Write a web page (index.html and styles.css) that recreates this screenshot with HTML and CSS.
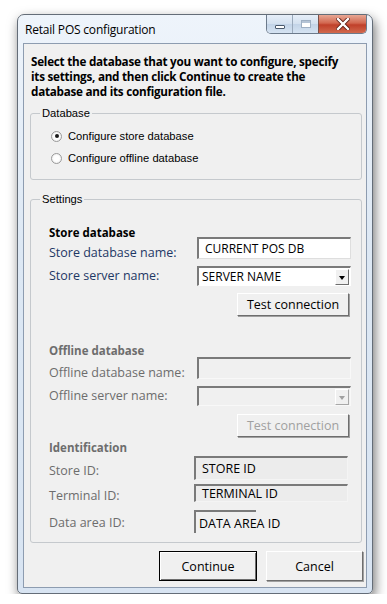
FILE: index.html
```html
<!DOCTYPE html>
<html lang="en">
<head>
    <meta charset="UTF-8">
    <title>Retail POS configuration</title>
    <link rel="stylesheet" href="styles.css">
</head>
<body>
    <div class="window">
        <!-- Title bar -->
        <div class="titlebar">
            <span class="title">Retail POS configuration</span>
            <div class="caption-buttons">
                <div class="cap-btn cap-min"><span class="min-glyph"></span></div>
                <div class="cap-btn cap-max"><span class="max-glyph"></span></div>
                <div class="cap-btn cap-close">
                    <svg width="14" height="12" viewBox="0 0 14 12">
                        <path d="M2 1 L12 11 M12 1 L2 11" stroke="#5a1a12" stroke-width="4" stroke-linecap="square"/>
                        <path d="M2 1 L12 11 M12 1 L2 11" stroke="#fff" stroke-width="2.4" stroke-linecap="square"/>
                    </svg>
                </div>
            </div>
        </div>

        <!-- Client area -->
        <div class="client">
            <p class="intro">Select the database that you want to configure, specify its settings, and then click Continue to create the database and its configuration file.</p>

            <fieldset class="group group-db">
                <legend>Database</legend>
                <label class="radio-row"><span class="radio checked"></span>Configure store database</label>
                <label class="radio-row"><span class="radio"></span>Configure offline database</label>
            </fieldset>

            <fieldset class="group group-settings">
                <legend>Settings</legend>

                <!-- Store database -->
                <div class="section-title title-store">Store database</div>
                <div class="field-row row-first">
                    <span class="label">Store database name:</span>
                    <div class="textbox">CURRENT POS DB</div>
                </div>
                <div class="field-row row-second">
                    <span class="label">Store server name:</span>
                    <div class="combo">
                        <span>SERVER NAME</span>
                        <span class="combo-arrow"></span>
                    </div>
                </div>
                <div class="btn-row">
                    <div class="btn btn-test">Test connection</div>
                </div>

                <!-- Offline database -->
                <div class="disabled">
                    <div class="section-title title-offline">Offline database</div>
                    <div class="field-row row-first">
                        <span class="label">Offline database name:</span>
                        <div class="textbox"></div>
                    </div>
                    <div class="field-row row-second">
                        <span class="label">Offline server name:</span>
                        <div class="combo">
                            <span></span>
                            <span class="combo-arrow"></span>
                        </div>
                    </div>
                    <div class="btn-row btn-row-offline">
                        <div class="btn btn-test">Test connection</div>
                    </div>
                </div>

                <!-- Identification -->
                <div class="disabled">
                    <div class="section-title title-ident">Identification</div>
                    <div class="id-row id-row-store">
                        <span class="label">Store ID:</span>
                        <div class="idbox idbox-wide">STORE ID</div>
                    </div>
                    <div class="id-row id-row-terminal">
                        <span class="label">Terminal ID:</span>
                        <div class="idbox idbox-wide">TERMINAL ID</div>
                    </div>
                    <div class="id-row id-row-area">
                        <span class="label">Data area ID:</span>
                        <div class="idbox idbox-short">DATA AREA ID</div>
                    </div>
                </div>
            </fieldset>

            <div class="dialog-buttons">
                <div class="btn btn-dialog btn-default">Continue</div>
                <div class="btn btn-dialog">Cancel</div>
            </div>
        </div>
    </div>
</body>
</html>
```

FILE: styles.css
```css
* {
    margin: 0;
    padding: 0;
    box-sizing: border-box;
}

body {
    background: #ffffff;
    font-family: 'Open Sans', 'Noto Sans', sans-serif;
    font-size: 12px;
    color: #000;
    padding: 14px 0 0 17px;
}

/* Window frame */
.window {
    width: 356px;
    height: 580px;
    border: 1px solid #646d78;
    border-radius: 7px 7px 5px 5px;
    background: linear-gradient(180deg, #eef4fb 0%, #dde8f4 40%, #d8e4f2 100%);
    box-shadow: 2px 5px 12px rgba(0, 0, 0, 0.55);
    padding: 0 5px 5px;
    display: flex;
    flex-direction: column;
}

.titlebar {
    height: 28px;
    display: flex;
    justify-content: space-between;
    align-items: flex-start;
}

.title {
    font-size: 12px;
    padding: 6px 0 0 2px;
    color: #000;
    letter-spacing: -0.2px;
}

.caption-buttons {
    display: flex;
    height: 19px;
    border: 1px solid #6c7a8b;
    border-top: none;
    border-radius: 0 0 5px 5px;
    overflow: hidden;
}

.cap-btn {
    height: 18px;
    display: flex;
    align-items: center;
    justify-content: center;
    background: linear-gradient(180deg, #e6eef8 0%, #d3e0ef 50%, #c2d3e7 51%, #d5e3f2 100%);
}

.cap-min {
    width: 26px;
    border-right: 1px solid #9aa9bb;
}

.cap-max {
    width: 26px;
    border-right: 1px solid #7a5048;
}

.cap-close {
    width: 47px;
    background: linear-gradient(180deg, #e7a794 0%, #d2674f 45%, #c0402a 55%, #d1694e 100%);
}

.min-glyph {
    width: 10px;
    height: 4px;
    margin-top: 5px;
    background: #fff;
    border: 1px solid #4b5a6d;
    border-radius: 1px;
}

.max-glyph {
    width: 10px;
    height: 8px;
    border: 1px solid #9fb0c4;
    background: #fff;
    box-shadow: inset 0 2px 0 #b5c4d6;
}

.client {
    flex: 1;
    background: #f0f0f0;
    border: 1px solid #8d9cb0;
    padding: 10px 4px 0 6px;
    display: flex;
    flex-direction: column;
}

.intro {
    max-width: 316px;
    font-weight: bold;
    font-size: 11.7px;
    line-height: 15px;
    letter-spacing: -0.25px;
    padding: 0 0 0 1px;
    margin-bottom: 8px;
}

/* Group boxes */
.group {
    border: 1px solid #c5c9cd;
    border-radius: 3px;
    padding: 0 0 0 18px;
    font-family: 'Liberation Sans', Arial, sans-serif;
    font-size: 11.2px;
}

.group legend {
    padding: 0 2px;
    margin-left: -9px;
    color: #000;
}

.group-db {
    height: 73px;
    padding-top: 6px;
    margin-bottom: 13px;
}

.radio-row {
    display: flex;
    align-items: center;
    height: 22px;
    color: #000;
}

.radio {
    width: 11px;
    height: 11px;
    border-radius: 50%;
    border: 1px solid #9a9a9a;
    background: radial-gradient(circle, #ffffff 40%, #e4e4e4 100%);
    margin-right: 6px;
    margin-left: 2px;
    position: relative;
}

.radio.checked::after {
    content: '';
    position: absolute;
    left: 2.5px;
    top: 2.5px;
    width: 4px;
    height: 4px;
    border-radius: 50%;
    background: #1a1a1a;
}

.group-settings {
    height: 350px;
    padding: 22px 10px 0 18px;
    font-family: 'Open Sans', 'Noto Sans', sans-serif;
    font-size: 12px;
}

.group-settings legend {
    font-family: 'Liberation Sans', Arial, sans-serif;
    font-size: 11.2px;
}

/* Section titles */
.section-title {
    font-weight: bold;
    font-size: 11.5px;
    line-height: 12px;
    height: 12px;
}

.title-store {
    height: 10px;
}

.title-offline {
    margin-top: 29px;
}

.title-ident {
    margin-top: 5px;
}

/* Field rows */
.field-row {
    display: flex;
    align-items: flex-start;
    justify-content: space-between;
}

.row-first {
    height: 22px;
}

.row-first .label {
    padding-top: 8px;
}

.row-second {
    height: 20px;
    margin-top: 7px;
    align-items: center;
}

.label {
    color: #1e3865;
    font-size: 12.5px;
    line-height: 16px;
}

.disabled .label,
.disabled .section-title {
    color: #6d6d6d;
}

.textbox,
.combo {
    width: 154px;
    height: 22px;
    background: #fff;
    border: 1px solid #dedede;
    border-top: 2px solid #7a7a7a;
    border-left: 2px solid #7a7a7a;
    padding: 1px 6px;
    font-size: 12px;
    line-height: 17px;
    color: #000;
}

.combo {
    height: 20px;
    display: flex;
    justify-content: space-between;
    align-items: center;
    padding: 0 1px 0 3px;
    border-right-color: #fff;
    border-bottom-color: #fff;
}

.combo-arrow {
    width: 14px;
    height: 16px;
    background: #f0f0f0;
    border: 1px solid;
    border-color: #fff #6d6d6d #6d6d6d #fff;
    position: relative;
}

.combo-arrow::after {
    content: '';
    position: absolute;
    left: 3px;
    top: 6px;
    border-left: 3.5px solid transparent;
    border-right: 3.5px solid transparent;
    border-top: 4px solid #000;
}

.disabled .textbox,
.disabled .combo {
    background: #f0f0f0;
    border-color: #e8e8e8 #f8f8f8 #f8f8f8 #e8e8e8;
    border-top-color: #7a7a7a;
    border-left-color: #7a7a7a;
}

.disabled .combo-arrow {
    border-color: #fff #a8a8a8 #a8a8a8 #fff;
}

.disabled .combo-arrow::after {
    border-top-color: #a0a0a0;
}

/* Buttons */
.btn-row {
    display: flex;
    justify-content: flex-end;
    padding-right: 2px;
    margin-top: 7px;
}

.btn-row-offline {
    margin-top: 8px;
}

.btn {
    display: flex;
    align-items: center;
    justify-content: center;
    background: #f0f0f0;
    border: 1px solid;
    border-color: #ffffff #6e6e6e #6e6e6e #ffffff;
    box-shadow: 1px 1px 0 #a0a0a0;
    color: #000;
    font-size: 12.5px;
}

.btn-test {
    width: 112px;
    height: 23px;
}

.disabled .btn-test {
    color: #a0a0a0;
}

/* Identification rows */
.id-row {
    display: flex;
    align-items: flex-start;
}

.id-row .label {
    width: 145px;
}

.id-row-store {
    height: 24px;
    margin-top: 2px;
}

.id-row-store .label {
    padding-top: 7px;
}

.id-row-terminal {
    height: 18px;
    margin-top: 4px;
}

.id-row-terminal .label {
    padding-top: 4px;
}

.id-row-area {
    height: 23px;
    margin-top: 8px;
}

.id-row-area .label {
    padding-top: 5px;
}

.idbox {
    height: 100%;
    background: #ececec;
    border-top: 2px solid #7a7a7a;
    border-left: 2px solid #7a7a7a;
    padding: 0 6px;
    display: flex;
    align-items: center;
    font-size: 12.5px;
    color: #000;
}

.idbox-wide {
    width: 154px;
    border-right: 1px solid #f4f4f4;
    border-bottom: 1px solid #f4f4f4;
}

.idbox-short {
    width: 62px;
    padding: 2px 0 0 3px;
    white-space: nowrap;
    background: #f0f0f0;
}

/* Dialog buttons */
.dialog-buttons {
    display: flex;
    justify-content: flex-end;
    gap: 9px;
    padding-top: 8px;
    margin-right: -1px;
}

.btn-dialog {
    width: 97px;
    height: 30px;
    font-size: 12.5px;
}

.btn-default {
    width: 98px;
    border: 1px solid #000;
    box-shadow: inset 1px 1px 0 #fff, inset -1px -1px 0 #6e6e6e;
}
```
